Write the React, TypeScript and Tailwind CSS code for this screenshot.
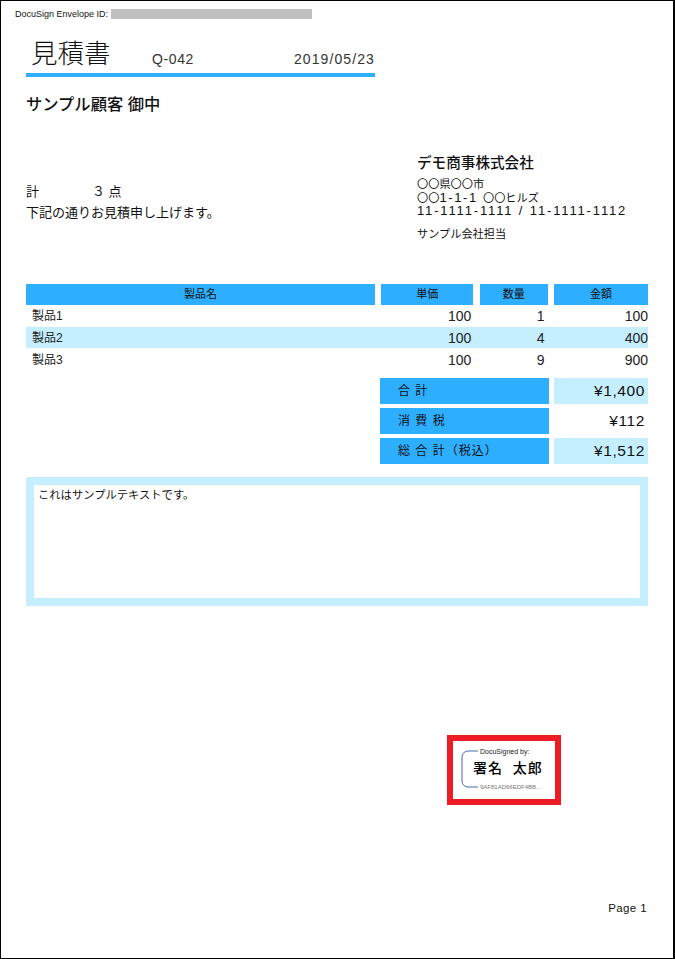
import React from 'react';

const sans = "font-['Liberation_Sans','Noto_Sans_CJK_JP',sans-serif]";

const rows = [
  { name: '製品1', price: '100', qty: '1', amount: '100', tint: false },
  { name: '製品2', price: '100', qty: '4', amount: '400', tint: true },
  { name: '製品3', price: '100', qty: '9', amount: '900', tint: false },
];

const totals = [
  { label: '合 計', value: '¥1,400', tint: true },
  { label: '消 費 税', value: '¥112', tint: false },
  { label: '総 合 計（税込）', value: '¥1,512', tint: true },
];

export default function App() {
  return (
    <div className={`${sans} w-[675px] h-[959px] bg-white border border-black border-r-2 flex flex-col text-[#111] overflow-hidden`}>
      <div className="flex items-center h-[10px] mt-[8px] pl-[14px]">
        <span className="text-[9px] leading-none w-[96px]">DocuSign Envelope ID:</span>
        <div className="w-[201px] h-[10px] bg-[#c0c0c0]" />
      </div>

      <div className="ml-[25px] w-[349px] mt-[17px] h-[36px] flex items-end">
        <span className="ml-[5px] w-[121px] text-[26.5px] leading-[36px] font-light">見積書</span>
        <span className="text-[14px] leading-[26px] tracking-[0.6px] text-[#333]">Q-042</span>
        <span className="ml-auto text-[14px] leading-[26px] tracking-[1.1px] text-[#333]">2019/05/23</span>
      </div>
      <div className="ml-[25px] w-[349px] h-[4px] mt-[1px] bg-[#2eaeff]" />

      <div className="ml-[25px] mt-[17px] text-[16.3px] leading-[20px] font-medium">サンプル顧客 御中</div>

      <div className="ml-[25px] mt-[39px] flex h-[100px]">
        <div className="w-[391px] pt-[28px] text-[13px] leading-[21px]">
          <div className="flex">
            <span className="w-[66px]">計</span>
            <span>３ 点</span>
          </div>
          <div>下記の通りお見積申し上げます。</div>
        </div>
        <div className="text-[11.2px] leading-[13px]">
          <div className="text-[14.6px] leading-[20px] mb-[5px] font-medium">デモ商事株式会社</div>
          <div>〇〇県〇〇市</div>
          <div className="h-[13px]">〇〇<span className="text-[13px] leading-[13px] tracking-[1.6px]">1-1-1 </span>〇〇ヒルズ</div>
          <div className="text-[13px] leading-[13px] tracking-[1.85px]">11-1111-1111 / 11-1111-1112</div>
          <div className="mt-[11px]">サンプル会社担当</div>
        </div>
      </div>

      <div className="ml-[25px] mt-[31px] w-[622px]">
        <div className="grid grid-cols-[349px_92px_68px_94px] gap-x-[6.33px] h-[21px] leading-[21px] text-center text-[11px]">
          <div className="bg-[#2eaeff]">製品名</div>
          <div className="bg-[#2eaeff]">単価</div>
          <div className="bg-[#2eaeff]">数量</div>
          <div className="bg-[#2eaeff]">金額</div>
        </div>
        <div>
          {rows.map((r) => (
            <div
              key={r.name}
              className={`grid grid-cols-[349px_92px_68px_94px] gap-x-[6.33px] h-[21px] mb-[1px] leading-[22px] text-[14px] text-[#222] ${r.tint ? 'bg-[#c5efff]' : ''}`}
            >
              <div className="pl-[6px] text-[12px]">{r.name}</div>
              <div className="text-right pr-[2px]">{r.price}</div>
              <div className="text-right pr-[3px]">{r.qty}</div>
              <div className="text-right">{r.amount}</div>
            </div>
          ))}
        </div>
      </div>

      <div className="ml-[379px] mt-[7px] w-[268px] flex flex-col gap-[4px]">
        {totals.map((t) => (
          <div key={t.label} className="flex justify-between h-[26px] leading-[26px]">
            <div className="w-[169px] bg-[#2eaeff] pl-[18px] text-[12px] tracking-[1px]">{t.label}</div>
            <div className={`w-[94px] text-right pr-[3px] tracking-[0.6px] text-[15.5px] ${t.tint ? 'bg-[#c5efff]' : ''}`}>
              {t.value}
            </div>
          </div>
        ))}
      </div>

      <div className="ml-[25px] mt-[13px] w-[622px] h-[129px] border-[8px] border-[#c5efff] pl-[4px] pt-[2px] text-[11.3px] leading-[16px]">
        これはサンプルテキストです。
      </div>

      <div className="ml-[446px] mt-[129px] w-[114px] h-[70px] border-[6px] border-[#ed1c24] pl-[8px] pt-[7px] flex">
        <svg width="17" height="38" viewBox="0 0 17 38" className="mt-[2px] shrink-0 -mr-[17px]">
          <path d="M17 1H7a6 6 0 0 0-6 6v24a6 6 0 0 0 6 6h10" fill="none" stroke="#3f6fb5" strokeWidth="1" />
        </svg>
        <div className="flex flex-col ml-[19px]">
          <div className="text-[7px] leading-[7px] text-[#222] whitespace-nowrap">DocuSigned by:</div>
          <div className="text-[14px] leading-[16px] mt-[5px] -ml-[7px] text-black whitespace-pre tracking-[1px] font-medium">署名  太郎</div>
          <div className="text-[6px] leading-[7px] text-[#777] mt-[8px] whitespace-nowrap">9AF81AD66EDF4BB...</div>
        </div>
      </div>

      <div className="mt-[96px] mr-[26px] text-right text-[11.5px] leading-[14px] tracking-[0.4px]">Page 1</div>
    </div>
  );
}
